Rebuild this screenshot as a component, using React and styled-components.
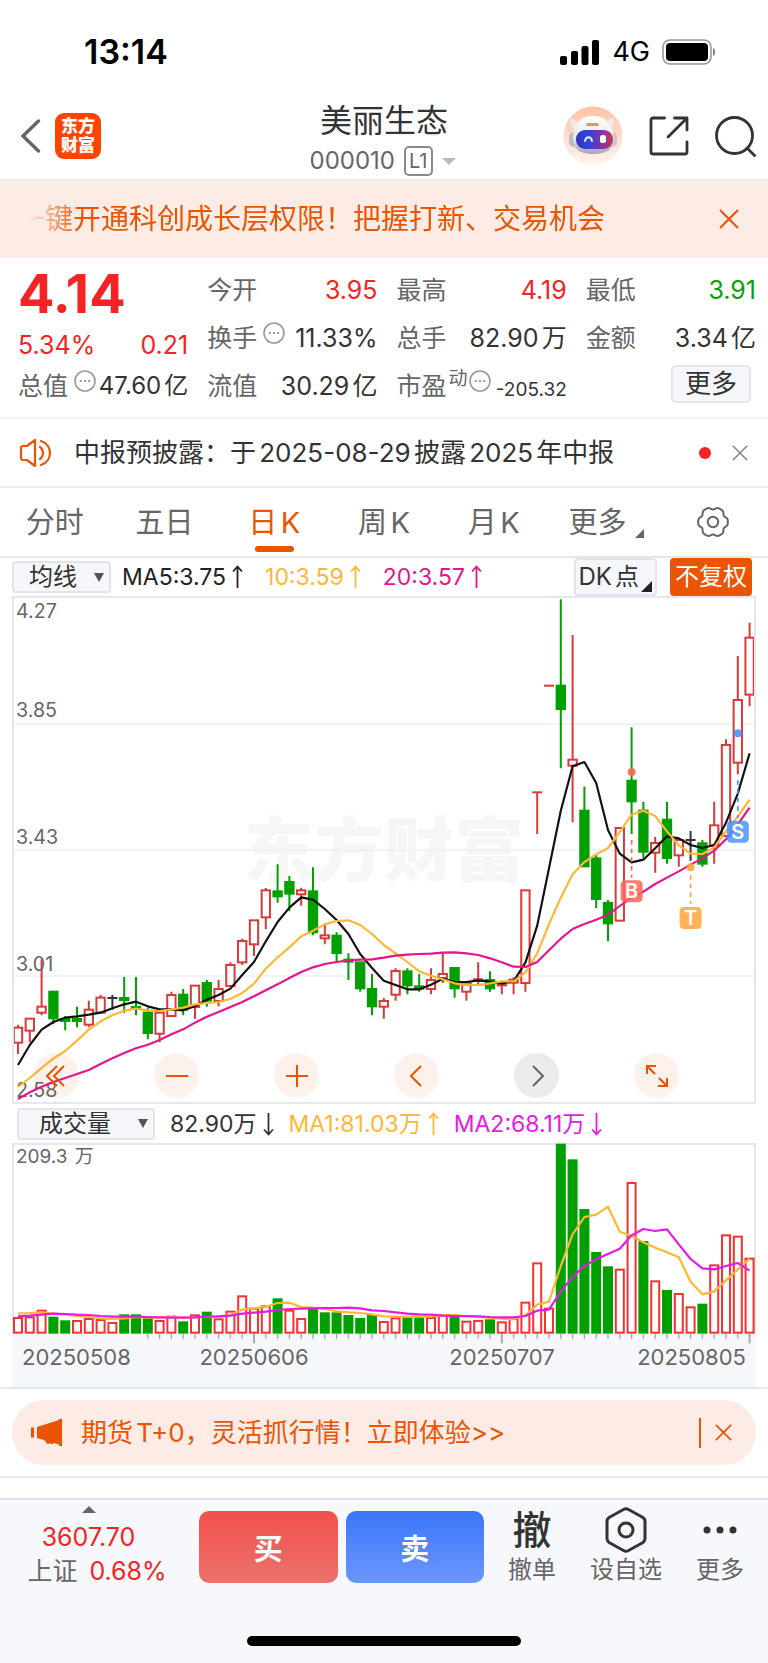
import React from 'react';
import styled, { createGlobalStyle } from 'styled-components';

const GlobalStyle = createGlobalStyle`
  * {
    box-sizing: border-box;
  }

  body {
    margin: 0;
    background: #fff;
    color: #333;
    font-family: 'Inter', 'Noto Sans CJK SC', sans-serif;
    text-autospace: normal;
  }

  button,
  select {
    font-family: inherit;
    color: inherit;
    margin: 0;
    padding: 0;
    border: 0;
    background: none;
    cursor: pointer;
  }

  svg {
    display: block;
    flex: none;
  }
`;

const Page = styled.div`
  display: flex;
  flex-direction: column;
  min-height: 100vh;
  background: #fff;
`;

/* ---------- status bar + header ---------- */

const StatusBar = styled.div`
  display: flex;
  align-items: center;
  justify-content: space-between;
  padding: 31px 52px 21px 84px;
  color: #000;
`;

const Clock = styled.time`
  font-size: 34px;
  line-height: 42px;
  font-weight: 600;
`;

const StatusIcons = styled.div`
  display: flex;
  align-items: center;
  gap: 12px;
  font-size: 27px;
  line-height: 32px;
`;

const Header = styled.header`
  display: grid;
  grid-template-columns: 1fr auto 1fr;
  align-items: center;
  height: 87px;
  padding: 0 12px 1px;
  border-bottom: 2px solid #eceef1;
`;

const HeaderSide = styled.div`
  display: flex;
  align-items: center;
  justify-content: ${(props) => (props.$end ? 'flex-end' : 'flex-start')};
  gap: ${(props) => (props.$end ? '26px' : '14px')};
  padding-left: 8px;
`;

const IconButton = styled.button`
  display: flex;
  align-items: center;
  justify-content: center;
`;

const BrandLogo = styled.div`
  width: 46px;
  height: 46px;
  padding: 4px 0;
  border-radius: 9px;
  background: #ff4400;
  color: #fff;
  font-size: 17px;
  line-height: 19px;
  font-weight: 900;
  text-align: center;
`;

const StockTitle = styled.div`
  display: flex;
  flex-direction: column;
  align-items: center;
  align-self: end;
  gap: 6px;
  padding-bottom: 2px;
`;

const StockName = styled.h1`
  margin: 0;
  font-size: 32px;
  line-height: 38px;
  font-weight: 400;
`;

const StockCode = styled.div`
  display: flex;
  align-items: center;
  gap: 9px;
  padding-right: 3px;
  color: #666;
  font-size: 24px;
  line-height: 30px;
`;

const LevelBadge = styled.span`
  height: 30px;
  padding: 0 3px;
  border: 2px solid #8a8a8a;
  border-radius: 5px;
  font-size: 20px;
  line-height: 26px;
`;

/* ---------- banners ---------- */

const TopBanner = styled.div`
  display: flex;
  align-items: center;
  justify-content: space-between;
  height: 77px;
  padding: 0 29px 2px 17px;
  background: #fdece5;
  color: #ea5504;
`;

const BannerText = styled.div`
  font-size: 28px;
  line-height: 40px;
  white-space: nowrap;
  mask-image: linear-gradient(to right, transparent 12px, #000 62px);
`;

const Notice = styled.div`
  display: flex;
  align-items: center;
  height: 69px;
  padding: 0 20px 0 19px;
  border-bottom: 2px solid #eef0f2;
`;

const NoticeText = styled.p`
  flex: 1;
  margin: 0 0 0 21px;
  font-size: 26px;
  line-height: 36px;
  white-space: nowrap;
`;

const RedDot = styled.span`
  width: 12px;
  height: 12px;
  margin-right: 21px;
  border-radius: 50%;
  background: #f52323;
`;

const NoticeClose = styled(IconButton)`
  color: #888;
`;

const Promo = styled.div`
  display: flex;
  align-items: center;
  height: 65px;
  margin: 11px 12px;
  padding: 0 24px 0 19px;
  border-radius: 32px;
  background: #fdece5;
  color: #ea5504;
`;

const PromoText = styled.p`
  flex: 1;
  margin: 0 0 0 19px;
  font-size: 26px;
  line-height: 36px;
  white-space: nowrap;
`;

const PromoClose = styled.button`
  display: flex;
  align-items: center;
  height: 30px;
  padding-left: 14px;
  border-left: 2px solid #ea5504;
`;

/* ---------- quote table ---------- */

const Quote = styled.section`
  display: grid;
  grid-template-columns: repeat(4, minmax(0, 1fr));
  grid-auto-rows: 48px;
  column-gap: 19px;
  padding: 8px 12px 7px 18px;
  border-bottom: 2px solid #eef0f2;
`;

const PriceCell = styled.div`
  grid-row: span 2;
  display: flex;
  flex-direction: column;
  justify-content: space-between;
  color: #f52323;
`;

const Price = styled.strong`
  font-size: 54px;
  line-height: 56px;
  font-weight: 700;
`;

const Change = styled.div`
  display: flex;
  justify-content: space-between;
  font-size: 25px;
  line-height: 34px;
`;

const Cell = styled.div`
  display: flex;
  align-items: center;
  justify-content: space-between;
  color: #666;
  font-size: 25px;
  line-height: 34px;
  white-space: nowrap;
`;

const CellLabel = styled.span`
  display: flex;
  align-items: center;
  gap: 6px;

  svg {
    margin-bottom: 10px;
  }
`;

const Superscript = styled.span`
  margin: 0 -5px 14px -4px;
  font-size: 19px;
  line-height: 20px;
`;

const TONES = { up: '#f52323', down: '#0a9f0a', plain: '#333' };

const CellValue = styled.span`
  color: ${(props) => TONES[props.$tone || 'plain']};
  font-size: ${(props) => (props.$small ? '19px' : props.$tight ? '24px' : '25px')};
  padding-top: ${(props) => (props.$small ? '8px' : '0')};
`;

const MoreButton = styled.button`
  align-self: center;
  justify-self: end;
  height: 38px;
  margin: 0 5px 4px 0;
  padding: 0 12px;
  border: 2px solid #e1e5e9;
  border-radius: 5px;
  background: #f6f7fa;
  font-size: 26px;
  line-height: 32px;
`;

/* ---------- period tabs ---------- */

const Tabs = styled.nav`
  display: grid;
  grid-template-columns: repeat(7, 1fr);
  height: 70px;
  border-bottom: 2px solid #e4e7eb;
`;

const Tab = styled.button`
  display: flex;
  flex-direction: column;
  align-items: center;
  justify-content: flex-end;
  gap: 3px;
  padding-bottom: 4px;
  color: ${(props) => (props.$active ? '#ea5504' : '#666')};
  font-size: 29px;
  line-height: 40px;

  &::after {
    content: '';
    width: 39px;
    height: 6px;
    border-radius: 3px;
    background: ${(props) => (props.$active ? '#ea5504' : 'transparent')};
  }
`;

const TabLabel = styled.span`
  display: flex;
  align-items: flex-end;
  gap: 9px;
  padding-left: 6px;

  svg {
    margin-bottom: 5px;
  }
`;

/* ---------- indicator rows ---------- */

const IndicatorRow = styled.div`
  display: flex;
  align-items: center;
  height: ${(props) => props.$height};
  padding: 0 16px 0 ${(props) => props.$start};
`;

const SelectBox = styled.label`
  display: flex;
  align-items: center;
  width: ${(props) => (props.$wide ? '138px' : '99px')};
  height: 32px;
  padding-right: 5px;
  border: 2px solid #e1e5e9;
  border-radius: 4px;
  background: #f6f7fa;

  select {
    flex: 1;
    min-width: 0;
    padding-left: ${(props) => (props.$wide ? '20px' : '15px')};
    appearance: none;
    outline: none;
    font-size: 24px;
    line-height: 28px;
  }
`;

const Readings = styled.div`
  display: flex;
  flex: 1;
  gap: ${(props) => props.$gap};
  margin-left: ${(props) => props.$start};
  font-size: 23px;
  line-height: 32px;
  white-space: nowrap;
  text-autospace: no-autospace;
`;

const Reading = styled.span`
  display: flex;
  align-items: center;
  gap: 6px;
  color: ${(props) => props.$color};
`;

const ChipButton = styled.button`
  display: flex;
  align-items: flex-end;
  justify-content: center;
  gap: 2px;
  height: 38px;
  margin-left: 13px;
  padding: 0 3px;
  border: 2px solid ${(props) => (props.$filled ? '#ea5504' : '#e1e5e9')};
  border-radius: 4px;
  background: ${(props) => (props.$filled ? '#ea5504' : '#f6f7fa')};
  color: ${(props) => (props.$filled ? '#fff' : '#333')};
  font-size: 24px;
  line-height: 34px;

  svg {
    margin-bottom: 2px;
  }
`;

/* ---------- charts ---------- */

const ChartFrame = styled.div`
  position: relative;
  margin: 0 12px;
  border: 2px solid #e4e7eb;
`;

const VolumeFrame = styled.div`
  margin: 0 12px;
`;

const ChartSvg = styled.svg`
  width: 100%;
  height: auto;
`;

const ChartControls = styled.div`
  position: absolute;
  left: 20px;
  right: 75px;
  bottom: 4px;
  display: flex;
  justify-content: space-between;
`;

const RoundButton = styled.button`
  display: flex;
  align-items: center;
  justify-content: center;
  width: 45px;
  height: 45px;
  border-radius: 50%;
  background: ${(props) => (props.$muted ? 'rgba(0, 0, 0, 0.08)' : 'rgba(234, 85, 4, 0.08)')};
  color: ${(props) => (props.$muted ? '#666' : '#ea5504')};
`;

const Divider = styled.hr`
  width: 100%;
  height: 2px;
  margin: 0;
  border: 0;
  background: #e4e7eb;
`;

/* ---------- bottom bar ---------- */

const BottomBar = styled.footer`
  display: flex;
  flex: 1;
  flex-direction: column;
  justify-content: space-between;
  margin-top: 20px;
  padding-bottom: 17px;
  border-top: 2px solid #dde1e5;
  background: #f7f8fb;
`;

const Actions = styled.div`
  display: flex;
  align-items: flex-start;
  padding-right: 24px;
`;

const IndexButton = styled.button`
  display: flex;
  flex-direction: column;
  align-items: center;
  width: 194px;
  padding: 6px 0 0;
  color: #f52323;
  font-size: 25px;
  line-height: 34px;

  svg {
    margin: 0 17px 7px 0;
  }
`;

const IndexValue = styled.span`
  padding-right: 17px;
`;

const IndexChange = styled.span`
  display: flex;
  gap: 12px;
`;

const IndexName = styled.span`
  color: #666;
`;

const TradeButton = styled.button`
  flex: 1;
  height: 72px;
  margin: 11px 0 0 ${(props) => (props.$sell ? '8px' : '5px')};
  border-radius: 10px;
  background: ${(props) =>
    props.$sell ? 'linear-gradient(#3a76f9, #6b97ff)' : 'linear-gradient(#f2504a, #eb726e)'};
  color: #fff;
  font-size: 29px;
  font-weight: 700;
`;

const ToolGroup = styled.div`
  display: flex;
  gap: 34px;
  margin-left: 24px;
`;

const Tool = styled.button`
  display: flex;
  flex-direction: column;
  align-items: center;
  padding-top: 7px;
  color: #666;
  font-size: 24px;
  line-height: 34px;
  white-space: nowrap;
`;

const ToolIcon = styled.span`
  display: flex;
  align-items: center;
  justify-content: center;
  height: 46px;
  color: #333;
  font-size: 39px;
  line-height: 46px;
  font-weight: 500;
`;

const HomeIndicator = styled.div`
  align-self: center;
  width: 274px;
  height: 10px;
  border-radius: 5px;
  background: #000;
`;

/* ---------- icons ---------- */

const CloseIcon = ({ size, width = 2 }) => (
  <svg width={size} height={size} viewBox="0 0 20 20" fill="none" stroke="currentColor" strokeWidth={width}>
    <path d="M1 1 19 19M19 1 1 19" />
  </svg>
);

const CaretIcon = ({ color = '#555', width = 10, height = 9, up }) => (
  <svg width={width} height={height} viewBox="0 0 10 10" preserveAspectRatio="none" fill={color}>
    <path d={up ? 'M0 10 5 0l5 10z' : 'M0 0h10L5 10z'} />
  </svg>
);

const CornerIcon = ({ size, color }) => (
  <svg width={size} height={size} viewBox="0 0 10 10" fill={color}>
    <path d="M10 0v10H0z" />
  </svg>
);

const ArrowIcon = ({ down }) => (
  <svg width="11" height="24" viewBox="0 0 11 24" fill="none" stroke="currentColor" strokeWidth="1.800">
    <path d={down ? 'M5.5 1v21M1 17.5l4.5 5 4.5-5' : 'M5.5 23V2M1 6.500l4.500-5 4.500 5'} />
  </svg>
);

const SignalIcon = () => (
  <svg width="40" height="25" viewBox="0 0 40 25">
    <rect x="0" y="16" width="7" height="9" rx="2" />
    <rect x="11" y="11" width="7" height="14" rx="2" />
    <rect x="21.500" y="6" width="7" height="19" rx="2" />
    <rect x="32" y="0" width="7" height="25" rx="2" />
  </svg>
);

const BatteryIcon = () => (
  <svg width="54" height="26" viewBox="0 0 54 26">
    <rect x="1" y="1" width="48" height="24" rx="7" fill="none" stroke="#999" strokeWidth="1.600" />
    <rect x="4" y="4" width="42" height="18" rx="4" />
    <path d="M51 9c3 1 3 7 0 8z" fill="#888" />
  </svg>
);

const BackIcon = () => (
  <svg width="21" height="36" viewBox="0 0 21 36" fill="none" stroke="#666" strokeWidth="3.500" strokeLinecap="round">
    <path d="M18.500 3 3 18l15.500 15" />
  </svg>
);

const RobotIcon = () => (
  <svg width="60" height="60" viewBox="0 0 60 60">
    <defs>
      <linearGradient id="halo" x2="0" y2="1">
        <stop offset="0" stopColor="#ffc3a5" />
        <stop offset="1" stopColor="#fff5f0" />
      </linearGradient>
      <linearGradient id="shell" x2="0" y2="1">
        <stop offset="0" stopColor="#fff" />
        <stop offset="0.600" stopColor="#e6e5ea" />
        <stop offset="1" stopColor="#a8a2ac" />
      </linearGradient>
      <linearGradient id="visor">
        <stop offset="0" stopColor="#3134b4" />
        <stop offset="0.300" stopColor="#2a45d8" />
        <stop offset="0.650" stopColor="#7a35ae" />
        <stop offset="1" stopColor="#c8394f" />
      </linearGradient>
    </defs>
    <circle cx="30" cy="30" r="29.500" fill="url(#halo)" />
    <path d="M9 11c-3 6-1 11 5 14l6-9c-5 1-9-1-11-5zM49 10c3 6 2 11-4 15l-6-9c5 1 8-2 10-6z" fill="#efebeb" />
    <rect x="6" y="26" width="10" height="15" rx="5" fill="#bdbbc6" />
    <rect x="45" y="26" width="9" height="15" rx="5" fill="#c9c6ce" />
    <path d="M30 10c12 0 20 8 21 22 0 11-7 16-21 16S10 43 10 32c0-14 8-22 20-22z" fill="url(#shell)" />
    <path d="M24 17h11l1 3H23z" fill="#e8954f" />
    <rect x="13" y="24" width="37" height="19" rx="9" fill="url(#visor)" />
    <path d="M22 35c1-5 6-5 7 0" fill="none" stroke="#dfe6ff" strokeWidth="2" strokeLinecap="round" />
    <rect x="37" y="29" width="6" height="8" rx="2.500" fill="#fff" />
  </svg>
);

const ShareIcon = () => (
  <svg width="40" height="40" viewBox="0 0 40 40" fill="none" stroke="#333" strokeWidth="2.800" strokeLinecap="round" strokeLinejoin="round">
    <path d="M15.500 2H4a2 2 0 0 0-2 2v32a2 2 0 0 0 2 2h32a2 2 0 0 0 2-2V26M25.500 2H38v12M38 2 19 21" />
  </svg>
);

const SearchIcon = () => (
  <svg width="41" height="41" viewBox="0 0 41 41" fill="none" stroke="#333" strokeWidth="2.800" strokeLinecap="round">
    <circle cx="19.500" cy="19.500" r="18" />
    <path d="m32 32 7.500 7.500" />
  </svg>
);

const InfoIcon = () => (
  <svg width="22" height="22" viewBox="0 0 22 22" fill="none" stroke="#999" strokeWidth="1.600">
    <circle cx="11" cy="11" r="10" />
    <path d="M5.800 11h2M10 11h2M14.200 11h2" strokeWidth="2" />
  </svg>
);

const SpeakerIcon = () => (
  <svg width="34" height="30" viewBox="0 0 34 30" fill="none" stroke="#ea5504" strokeWidth="2.200" strokeLinejoin="round" strokeLinecap="round">
    <path d="M16 2v26L8 22H4a2 2 0 0 1-2-2V10a2 2 0 0 1 2-2h4zM21 9c4 3 4 9 0 12M22 3c12 4 12 20 0 24" />
  </svg>
);

const MegaphoneIcon = () => (
  <svg width="31" height="27" viewBox="0 0 31 27" fill="#ea5504">
    <path d="M0 8.500h3v10H0zM6 8 28 1V0h3v27h-3v-1.500l-5-1.500c-1 1.500-3 1.500-4 0-1 1.500-4 1-4-1l-2-2-7-2z" />
  </svg>
);

const gearPath =
  Array.from({ length: 73 }, (_, i) => {
    const a = (i * Math.PI) / 36;
    const r = 14 + 1.2 * Math.cos(6 * a) - 0.4 * Math.cos(12 * a);
    return `${i ? 'L' : 'M'}${16 + r * Math.cos(a)} ${16 + r * Math.sin(a)}`;
  }).join('') + 'Z';

const GearIcon = () => (
  <svg width="32" height="32" viewBox="0 0 32 32" fill="none" stroke="#666" strokeWidth="2" strokeLinejoin="round">
    <path d={gearPath} />
    <circle cx="16" cy="16" r="5.200" />
  </svg>
);

const NutIcon = () => (
  <svg width="42" height="46" viewBox="0 0 42 46" fill="none" stroke="#333" strokeWidth="3" strokeLinejoin="round">
    <path d="M18.500 2.500q2.500-1.500 5 0L38 10.500q2 1.500 2 4v17q0 2.500-2 4l-14.500 8q-2.500 1.500-5 0L4 35.500q-2-1.500-2-4v-17q0-2.500 2-4z" />
    <circle cx="21" cy="23" r="7" />
  </svg>
);

const DotsIcon = () => (
  <svg width="34" height="8" viewBox="0 0 34 8" fill="#333">
    <circle cx="4" cy="4" r="3.500" />
    <circle cx="17" cy="4" r="3.500" />
    <circle cx="30" cy="4" r="3.500" />
  </svg>
);

const controls = [
  { name: '最左', d: 'M12 2 2 12l10 10M19 2 9 12l10 10' },
  { name: '缩小', d: 'M1 12h22' },
  { name: '放大', d: 'M1 12h22M12 1v22' },
  { name: '左移', d: 'M16 2 6 12l10 10' },
  { name: '右移', d: 'M8 2l10 10L8 22', muted: true },
  { name: '全屏', d: 'M2 10V2h9M2 2l8 8M22 14v8h-9M22 22l-8-8' },
];

/* ---------- chart data ---------- */

// [kind, high, body top, body bottom, low]
const candles = [
  ['up', 1288, 1297, 1341, 1375], ['up', 1268, 1270, 1306, 1340], ['up', 1095, 1235, 1252, 1260],
  ['down', 1190, 1190, 1269, 1286], ['down', 1262, 1271, 1277, 1305], ['down', 1235, 1271, 1277, 1296],
  ['up', 1217, 1244, 1288, 1296], ['up', 1200, 1208, 1252, 1252], ['flat', 1200, 1209, 1209, 1244],
  ['down', 1147, 1209, 1215, 1252], ['down', 1147, 1236, 1242, 1260], ['down', 1238, 1252, 1313, 1331],
  ['up', 1250, 1252, 1315, 1340], ['up', 1190, 1200, 1262, 1262], ['down', 1182, 1199, 1244, 1260],
  ['up', 1173, 1173, 1236, 1270], ['down', 1156, 1165, 1217, 1235], ['up', 1156, 1182, 1218, 1234],
  ['up', 1104, 1111, 1174, 1174], ['up', 1034, 1040, 1104, 1111], ['up', 979, 979, 1050, 1085],
  ['up', 884, 891, 970, 1006], ['down', 814, 893, 908, 927], ['down', 848, 866, 900, 953],
  ['up', 883, 891, 902, 936], ['down', 822, 893, 1015, 1024], ['up', 989, 1024, 1033, 1050],
  ['down', 1015, 1025, 1076, 1102], ['down', 1077, 1096, 1102, 1156], ['down', 1104, 1104, 1180, 1190],
  ['down', 1138, 1182, 1234, 1260], ['up', 1209, 1218, 1235, 1270], ['up', 1121, 1129, 1199, 1217],
  ['down', 1121, 1130, 1172, 1198], ['down', 1138, 1175, 1181, 1190], ['up', 1121, 1156, 1182, 1198],
  ['up', 1077, 1138, 1150, 1165], ['down', 1120, 1120, 1180, 1208], ['up', 1164, 1164, 1190, 1217],
  ['up', 1104, 1154, 1158, 1172], ['down', 1130, 1156, 1180, 1190], ['up', 1165, 1166, 1172, 1198],
  ['up', 1148, 1155, 1164, 1198], ['up', 890, 891, 1165, 1190], ['up', 601, 601, 601, 724],
  ['up', 285, 285, 285, 285], ['down', 30, 285, 354, 530], ['up', 135, 504, 522, 689],
  ['down', 584, 655, 820, 820], ['down', 786, 796, 916, 944], ['down', 919, 928, 988, 1041],
  ['up', 705, 706, 980, 980], ['down', 408, 566, 627, 724], ['down', 628, 655, 776, 795],
  ['up', 733, 750, 779, 838], ['down', 628, 681, 795, 812], ['up', 742, 742, 787, 821],
  ['flat', 715, 742, 742, 803], ['down', 742, 751, 812, 821], ['up', 628, 698, 758, 812],
  ['up', 444, 461, 730, 730], ['up', 197, 327, 513, 547], ['up', 99, 143, 312, 346],
];

const ma5 = [
  1407, 1348, 1303, 1280, 1267, 1263, 1258, 1252, 1240, 1228, 1220, 1234, 1243, 1243, 1246, 1234, 1214, 1200, 1181,
  1141, 1103, 1041, 984, 942, 911, 918, 946, 978, 1020, 1079, 1120, 1158, 1171, 1183, 1183, 1170, 1152, 1162, 1162,
  1157, 1161, 1166, 1160, 1105, 995, 825, 655, 524, 511, 573, 712, 782, 808, 800, 766, 731, 737, 756, 765, 756, 690,
  605, 485,
];

const ma10 = [
  1472, 1446, 1416, 1389, 1366, 1335, 1303, 1278, 1260, 1247, 1241, 1246, 1248, 1243, 1238, 1228, 1224, 1221, 1212,
  1194, 1167, 1122, 1089, 1059, 1027, 1010, 991, 981, 979, 993, 1020, 1052, 1077, 1103, 1130, 1143, 1154, 1166, 1171,
  1171, 1166, 1160, 1160, 1133, 1077, 990, 912, 843, 807, 784, 765, 718, 667, 655, 671, 716, 757, 782, 783, 763, 716,
  672, 622,
];

const ma20 = [
  1508, 1488, 1471, 1458, 1446, 1434, 1422, 1404, 1388, 1372, 1358, 1347, 1333, 1317, 1302, 1282, 1264, 1250, 1236,
  1221, 1204, 1186, 1169, 1150, 1132, 1118, 1108, 1103, 1098, 1096, 1095, 1090, 1084, 1081, 1079, 1078, 1075, 1074,
  1077, 1082, 1092, 1104, 1116, 1117, 1103, 1068, 1034, 1005, 990, 977, 963, 937, 912, 894, 872, 853, 834, 815, 796,
  773, 740, 695, 646,
];

const volumeTops = [
  681, 679, 659, 680, 691, 690, 684, 687, 696, 673, 673, 682, 690, 677, 694, 673, 665, 685, 662, 616, 653, 646, 625,
  659, 684, 655, 667, 667, 675, 684, 673, 693, 682, 682, 682, 681, 673, 678, 692, 690, 688, 694, 684, 635, 517, 653,
  161, 208, 357, 486, 529, 536, 276, 453, 571, 600, 609, 649, 641, 523, 433, 437, 503,
];

const volumeDown = [3, 4, 9, 10, 11, 14, 16, 22, 25, 26, 27, 28, 29, 30, 33, 34, 37, 40, 46, 47, 48, 49, 50, 53, 55, 58];

const volumeMa1 = [
  669, 668, 666, 670, 672, 677, 680, 684, 686, 684, 680, 682, 681, 680, 682, 681, 680, 678, 674, 658, 654, 649, 638,
  637, 650, 652, 656, 663, 666, 668, 672, 678, 679, 679, 679, 679, 674, 674, 678, 680, 683, 685, 687, 675, 643, 634,
  527, 432, 380, 373, 349, 424, 436, 456, 472, 486, 501, 574, 612, 603, 570, 537, 505,
];

const volumeMa2 = [
  678, 676, 673, 670, 671, 673, 674, 677, 679, 679, 679, 680, 681, 682, 682, 681, 679, 678, 676, 670, 667, 664, 659,
  656, 655, 654, 653, 653, 652, 654, 660, 662, 666, 670, 672, 673, 676, 677, 677, 678, 680, 681, 681, 677, 661, 658,
  604, 560, 527, 507, 491, 475, 435, 416, 422, 417, 462, 506, 534, 537, 527, 518, 541,
];

const levels = [
  { label: '4.27', y: 85 },
  { label: '3.85', y: 379, line: 398 },
  { label: '3.43', y: 752, line: 771 },
  { label: '3.01', y: 1128, line: 1144 },
  { label: '2.58', y: 1502 },
];

const markers = [
  { letter: 'B', index: 52, color: '#ff6655', dot: 540, from: 742, box: 861 },
  { letter: 'T', index: 57, color: '#ffa53c', dot: 822, from: 845, box: 940 },
  { letter: 'S', index: 61, color: '#4a94ff', dot: 426, from: 565, box: 684 },
];

const CANDLE_COLORS = { up: '#d93a3a', down: '#00a000', flat: '#333' };
const xAt = (i) => 54 + i * 35.4;
const yAt = (v) => Math.round(v * 1.014);

const Line = ({ values, color, scale = (v) => v }) => (
  <polyline
    points={values.map((v, i) => `${xAt(i)},${scale(v)}`).join(' ')}
    fill="none"
    stroke={color}
    strokeWidth="6.500"
    strokeLinejoin="round"
  />
);

const Candle = ({ index, data }) => {
  const kind = data[0];
  const [high, top, bottom, low] = data.slice(1).map(yAt);
  const x = xAt(index);
  const color = CANDLE_COLORS[kind];
  const flat = bottom - top < 2;
  return (
    <g stroke={color} strokeWidth="6" fill={kind === 'down' ? color : '#fff'}>
      <path d={`M${x} ${high}V${top}M${x} ${bottom}V${low}`} />
      {flat ? <path d={`M${x - 15} ${top}h30`} /> : <rect x={x - 12.5} y={top} width="25" height={bottom - top} />}
    </g>
  );
};

const Marker = ({ letter, index, color, dot, from, box }) => {
  const x = xAt(index);
  const top = yAt(box);
  return (
    <g fill={color}>
      <circle cx={x} cy={yAt(dot)} r="12" opacity="0.9" />
      <path d={`M${x} ${yAt(from)}V${top - 8}`} stroke={color} strokeWidth="5" strokeDasharray="14 12" />
      <rect x={x - 33} y={top} width="66" height="66" rx="13" opacity="0.85" />
      <text x={x} y={top + 54} textAnchor="middle" fontSize="60" fontWeight="600" fill="#fff">
        {letter}
      </text>
    </g>
  );
};

const PriceChart = () => (
  <ChartSvg viewBox="42 26 2220 1512" role="img" aria-label="日K">
    <text x="1152" y="860" textAnchor="middle" fontSize="210" fontWeight="900" fill="#f6f6f7">
      东方财富
    </text>
    {levels.map(
      (level) =>
        level.line && <path key={level.label} d={`M38 ${yAt(level.line)}H2266`} stroke="#ebeff7" strokeWidth="5" />
    )}
    {candles.map((data, i) => (
      <Candle key={i} index={i} data={data} />
    ))}
    {levels.map((level) => (
      <text key={level.label} x="48" y={yAt(level.y)} fontSize="59" fill="#666">
        {level.label}
      </text>
    ))}
    <Line values={ma5} color="#111" scale={yAt} />
    <Line values={ma10} color="#ffb733" scale={yAt} />
    <Line values={ma20} color="#e6148c" scale={yAt} />
    {markers.map((marker) => (
      <Marker key={marker.letter} {...marker} />
    ))}
  </ChartSvg>
);

const VolumeChart = () => (
  <ChartSvg viewBox="36 158 2232 732" role="img" aria-label="成交量">
    <rect x="36" y="730" width="2232" height="160" fill="#f6f7fa" />
    <path d="M39 730V161H2265V730" fill="none" stroke="#e4e7eb" strokeWidth="6" />
    <text x="48" y="219" fontSize="57" fill="#666">
      209.3万
    </text>
    {volumeTops.map((top, i) => {
      const down = volumeDown.includes(i);
      const color = down ? '#00a000' : '#fa2f2f';
      return (
        <rect
          key={i}
          x={xAt(i) - 12}
          y={top + 2}
          width="24"
          height={725 - top}
          fill={down ? color : '#fff'}
          stroke={color}
          strokeWidth="6"
        />
      );
    })}
    <Line values={volumeMa1} color="#ffb733" />
    <Line values={volumeMa2} color="#e619e6" />
    {volumeTops.map((_, i) => {
      const major = i === 20 || i === 41 || i === 62;
      if (i < 11) return null;
      return <path key={i} d={`M${xAt(i)} 731v${major ? 28 : 15}`} stroke="#aaa" strokeWidth={major ? 6 : 4} />;
    })}
    <g fontSize="66" fill="#666">
      <text x="66" y="823">20250508</text>
      <text x="762" y="823" textAnchor="middle">20250606</text>
      <text x="1506" y="823" textAnchor="middle">20250707</text>
      <text x="2238" y="823" textAnchor="end">20250805</text>
    </g>
  </ChartSvg>
);

const tabs = ['分时', '五日', '日K', '周K', '月K'];

const App = () => {
  return (
    <Page>
      <GlobalStyle />

      <StatusBar>
        <Clock>13:14</Clock>
        <StatusIcons>
          <SignalIcon />
          <span>4G</span>
          <BatteryIcon />
        </StatusIcons>
      </StatusBar>

      <Header>
        <HeaderSide>
          <IconButton aria-label="返回">
            <BackIcon />
          </IconButton>
          <BrandLogo>
            东方
            <br />
            财富
          </BrandLogo>
        </HeaderSide>
        <StockTitle>
          <StockName>美丽生态</StockName>
          <StockCode>
            <span>000010</span>
            <LevelBadge>L1</LevelBadge>
            <CaretIcon color="#bbb" width={14} height={7} />
          </StockCode>
        </StockTitle>
        <HeaderSide $end>
          <IconButton aria-label="助手">
            <RobotIcon />
          </IconButton>
          <IconButton aria-label="分享">
            <ShareIcon />
          </IconButton>
          <IconButton aria-label="搜索">
            <SearchIcon />
          </IconButton>
        </HeaderSide>
      </Header>

      <TopBanner>
        <BannerText>一键开通科创成长层权限！把握打新、交易机会</BannerText>
        <IconButton aria-label="关闭">
          <CloseIcon size={20} />
        </IconButton>
      </TopBanner>

      <Quote>
        <PriceCell>
          <Price>4.14</Price>
          <Change>
            <span>5.34%</span>
            <span>0.21</span>
          </Change>
        </PriceCell>
        <Cell>
          <CellLabel>今开</CellLabel>
          <CellValue $tone="up">3.95</CellValue>
        </Cell>
        <Cell>
          <CellLabel>最高</CellLabel>
          <CellValue $tone="up">4.19</CellValue>
        </Cell>
        <Cell>
          <CellLabel>最低</CellLabel>
          <CellValue $tone="down">3.91</CellValue>
        </Cell>
        <Cell>
          <CellLabel>
            换手
            <InfoIcon />
          </CellLabel>
          <CellValue>11.33%</CellValue>
        </Cell>
        <Cell>
          <CellLabel>总手</CellLabel>
          <CellValue>82.90万</CellValue>
        </Cell>
        <Cell>
          <CellLabel>金额</CellLabel>
          <CellValue>3.34亿</CellValue>
        </Cell>
        <Cell>
          <CellLabel>
            总值
            <InfoIcon />
          </CellLabel>
          <CellValue $tight>47.60亿</CellValue>
        </Cell>
        <Cell>
          <CellLabel>流值</CellLabel>
          <CellValue>30.29亿</CellValue>
        </Cell>
        <Cell>
          <CellLabel>
            市盈
            <Superscript>动</Superscript>
            <InfoIcon />
          </CellLabel>
          <CellValue $small>-205.32</CellValue>
        </Cell>
        <MoreButton>更多</MoreButton>
      </Quote>

      <Notice>
        <SpeakerIcon />
        <NoticeText>中报预披露：于2025-08-29披露2025年中报</NoticeText>
        <RedDot />
        <NoticeClose aria-label="关闭公告">
          <CloseIcon size={16} />
        </NoticeClose>
      </Notice>

      <Tabs>
        {tabs.map((tab) => (
          <Tab key={tab} $active={tab === '日K'}>
            {tab}
          </Tab>
        ))}
        <Tab>
          <TabLabel>
            更多
            <CornerIcon size={9} color="#666" />
          </TabLabel>
        </Tab>
        <IconButton aria-label="设置">
          <GearIcon />
        </IconButton>
      </Tabs>

      <IndicatorRow $start="12px" $height="38px">
        <SelectBox>
          <select aria-label="主图指标">
            <option>均线</option>
          </select>
          <CaretIcon />
        </SelectBox>
        <Readings $gap="22px" $start="11px">
          <Reading $color="#222">
            MA5:3.75
            <ArrowIcon />
          </Reading>
          <Reading $color="#ffb733">
            10:3.59
            <ArrowIcon />
          </Reading>
          <Reading $color="#e6148c">
            20:3.57
            <ArrowIcon />
          </Reading>
        </Readings>
        <ChipButton>
          DK点
          <CornerIcon size={11} color="#222" />
        </ChipButton>
        <ChipButton $filled>不复权</ChipButton>
      </IndicatorRow>

      <ChartFrame>
        <PriceChart />
        <ChartControls>
          {controls.map((control) => (
            <RoundButton key={control.name} $muted={control.muted} aria-label={control.name}>
              <svg width="24" height="24" viewBox="0 0 24 24" fill="none" stroke="currentColor" strokeWidth="2">
                <path d={control.d} />
              </svg>
            </RoundButton>
          ))}
        </ChartControls>
      </ChartFrame>

      <IndicatorRow $start="17px" $height="39px">
        <SelectBox $wide>
          <select aria-label="副图指标">
            <option>成交量</option>
          </select>
          <CaretIcon />
        </SelectBox>
        <Readings $gap="15px" $start="15px">
          <Reading $color="#333">
            82.90万
            <ArrowIcon down />
          </Reading>
          <Reading $color="#ffb733">
            MA1:81.03万
            <ArrowIcon />
          </Reading>
          <Reading $color="#e619e6">
            MA2:68.11万
            <ArrowIcon down />
          </Reading>
        </Readings>
      </IndicatorRow>

      <VolumeFrame>
        <VolumeChart />
      </VolumeFrame>
      <Divider />

      <Promo>
        <MegaphoneIcon />
        <PromoText>期货T+0，灵活抓行情！立即体验&gt;&gt;</PromoText>
        <PromoClose aria-label="关闭推广">
          <CloseIcon size={17} />
        </PromoClose>
      </Promo>
      <Divider />

      <BottomBar>
        <Actions>
          <IndexButton>
            <CaretIcon up width={14} height={7} color="#666" />
            <IndexValue>3607.70</IndexValue>
            <IndexChange>
              <IndexName>上证</IndexName>
              0.68%
            </IndexChange>
          </IndexButton>
          <TradeButton>买</TradeButton>
          <TradeButton $sell>卖</TradeButton>
          <ToolGroup>
            <Tool>
              <ToolIcon>撤</ToolIcon>
              撤单
            </Tool>
            <Tool>
              <ToolIcon>
                <NutIcon />
              </ToolIcon>
              设自选
            </Tool>
            <Tool>
              <ToolIcon>
                <DotsIcon />
              </ToolIcon>
              更多
            </Tool>
          </ToolGroup>
        </Actions>
        <HomeIndicator />
      </BottomBar>
    </Page>
  );
};

export default App;
